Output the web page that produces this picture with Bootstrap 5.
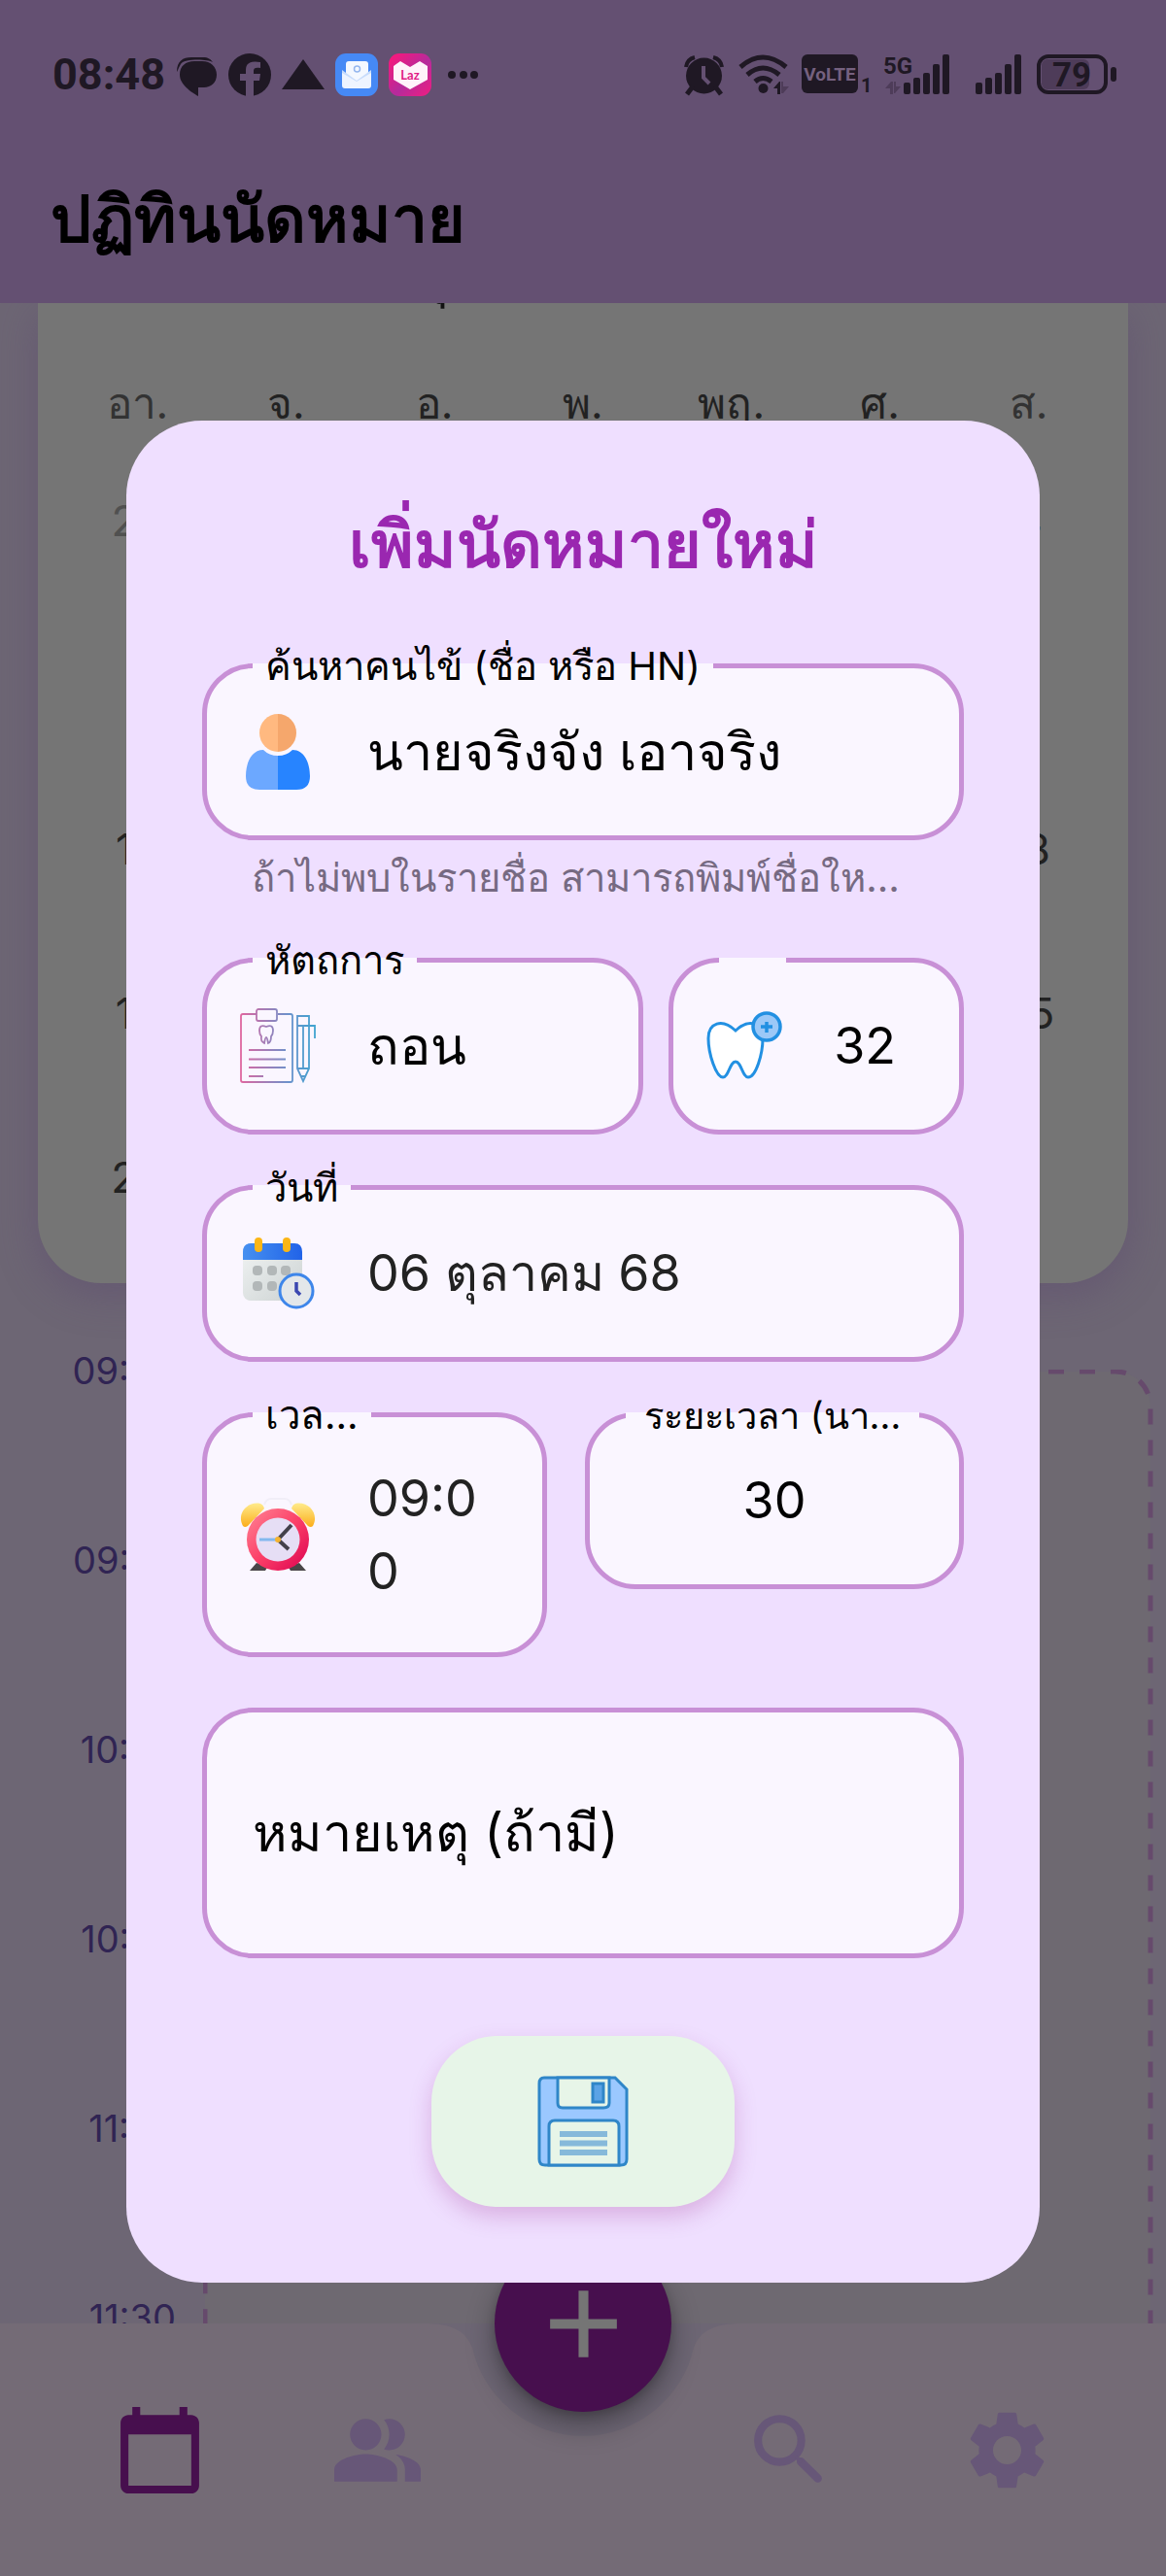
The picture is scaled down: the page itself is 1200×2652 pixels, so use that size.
<!DOCTYPE html>
<html lang="th">
<head>
<meta charset="utf-8">
<meta name="viewport" content="width=device-width, initial-scale=1">
<title>ปฏิทินนัดหมาย</title>
<link href="https://cdn.jsdelivr.net/npm/bootstrap@5.3.0/dist/css/bootstrap.min.css" rel="stylesheet">
<style>
:root{--ink:#1f1824;--bar:#645072;--page:#6d6674;--lilac:#efdfff;--field:#faf6ff;--line:#c890d6}
body{font-family:Inter,"Noto Sans",sans-serif;background:var(--page);color:#000}
.app-shell{height:100vh;min-height:2652px;overflow:hidden}
.app-bar{background:var(--bar);height:312px}
.status-row{height:130px;padding:24px 50px 0 54px;color:var(--ink)}
.status-row svg{display:block;flex:none}
.clock{font:700 45px/44px Roboto,sans-serif;margin-right:12px}
.app-title{font-size:66px;font-weight:700;line-height:90px;padding:50px 52px 0}
.scroll-area{overflow:hidden;min-height:0;padding:0 39px}
.month-card{background:#757575;border-radius:0 0 65px 65px;height:1009px;padding:0 26px;box-shadow:0 12px 40px rgba(90,72,110,.45);overflow:hidden}
.month-name{font-size:60px;line-height:78px;margin-top:-71px;text-align:center;color:#111}
.month-grid{width:100%;table-layout:fixed;text-align:center;font-size:44px;color:#222}
.month-grid th{font-weight:400;height:131px;padding-top:62px;line-height:69px;vertical-align:top;font-size:44px}
.month-grid th.rest-day{color:#333}
.month-grid td{height:169px;line-height:50px;padding:0}
.month-grid td.off-month{color:#505050}
.day-plan{margin-top:65px}
.hours{width:170px;flex:none;font-size:38px;line-height:50px;color:#302453;padding-right:28px;text-align:right}
.hours li{height:195px}
.slot-box{height:1100px;margin:24px -26px 0 0}
.slot-box rect{width:calc(100% - 5px);height:calc(100% - 5px);fill:#6e6971;stroke:#664a6c;stroke-width:5;stroke-dasharray:16 16}
.bottom-nav{height:260px;padding:0 52px}
.bottom-nav a{color:#675778;flex:1}
.bottom-nav a.current{color:#470f4e}
.bottom-nav svg{width:97px;height:97px;fill:currentColor;display:block}
.nav-shape{inset:0;color:#746b76}
.nav-shape div{background:currentColor}
.nav-shape .nav-notch{width:400px;height:260px;flex:none}
.nav-gap{width:200px}
.fab{width:182px;height:182px;top:-91px;left:calc(50% - 91px);background:#470f4e;color:#757575;box-shadow:0 14px 30px rgba(0,0,0,.32),0 4px 10px rgba(0,0,0,.15)}
.overlay{inset:0;padding:130px 130px 0}
.sheet{background:var(--lilac);border-radius:78px;padding:78px}
.sheet-title{color:#9a27b0;font-size:66px;line-height:98px;font-weight:700;margin-bottom:74px}
.form-stack{gap:52px}
.pair-a{gap:26px}.pair-b{gap:39px}
.w-proc{width:60%}.w-tooth{width:40%}
.w-time{width:calc(100% * 10 / 21)}.w-long{width:calc(100% * 11 / 21)}
.box-field{border:5px solid var(--line);border-radius:52px;background:var(--field);min-height:182px;padding:46px 34px;gap:53px;min-width:0}
.box-field>svg{width:78px;height:78px;flex:none}
.box-field>label{top:-33px;left:47px;height:56px;line-height:62px;font-size:40px;padding:0 13px;white-space:nowrap;background:linear-gradient(transparent 50%,var(--field) 50%)}
.box-field>label.blank-label{width:69px}
.box-field>label.wide-label{left:37px;padding:0 19px;font-size:38px}
.box-field .form-control{color:#000;font-size:54px;line-height:78px;height:78px;min-height:0;font-family:inherit;resize:none;overflow:hidden;border-radius:0}
.box-field .num-ink{font-size:52px}
.box-field .date-ink{color:#222;font-size:52px}
.box-field .time-two{height:150px;line-height:75px;word-break:break-all;width:122px}
.note-field{min-height:258px;padding:46px 47px}
.note-field .form-control{line-height:84px;height:84px}
.note-field .form-control::placeholder{color:#000;opacity:1}
.hint{color:#766a82;font-size:40px;line-height:61px;padding:0 51px;margin-top:8px}
.save-btn{width:312px;height:176px;border-radius:68px;background:#e7f5e8;margin-top:80px;box-shadow:0 10px 22px rgba(156,39,140,.25)}
</style>
</head>
<body>
<div class="app-shell position-relative d-flex flex-column">
  <header class="app-bar flex-shrink-0">
    <div class="status-row d-flex align-items-center justify-content-between">
      <div class="d-flex align-items-center">
        <span class="clock">08:48</span>
        <svg width="310" height="44" viewBox="0 0 310 44" fill="#1f1824" aria-hidden="true">
          <path d="M0 19C0 8 6 4 15 4h12c5 0 8 2 10 5C32 6 8 5 4 11c-2 3-3 7-4 8z"/>
          <path d="M3 22C3 13 9 8 18 8h8c9 0 15 6 15 14s-6 13-13 13h-6v9C15 40 3 32 3 22z"/>
          <circle cx="75" cy="22" r="22"/>
          <path fill="#645072" d="M71 44V28h-6v-7h6v-4c0-7 5-10 15-8v6c-5-1-7 0-7 3v3h7l-1 7h-6v16z"/>
          <path d="M130 6l22 31h-44z"/>
          <rect x="163" width="44" height="44" rx="11" fill="#4689f5"/>
          <rect x="174" y="8" width="23" height="24" rx="3" fill="#f4f8ff"/>
          <path fill="#c8dcfb" d="M170 17l15 11 15-11v13h-30z"/><path fill="#eef4ff" d="M170 20l15 9 15-9v13q0 3-3 3h-24q-3 0-3-3z"/>
          <circle cx="185.500" cy="16" r="3" fill="none" stroke="#94b6ee" stroke-width="1.500"/>
          <defs><linearGradient id="lz" x1="0" y1="0" x2="1" y2="1"><stop offset="0" stop-color="#ff1578"/><stop offset=".55" stop-color="#b52b9c"/><stop offset="1" stop-color="#f01d80"/></linearGradient></defs>
          <rect x="218" width="44" height="44" rx="11" fill="url(#lz)"/>
          <path fill="#fff2fa" d="M223 13l7-5 10 6 10-6 8 5v14l-18 10-17-10z"/>
          <text x="240" y="27" text-anchor="middle" font-family="Lato,sans-serif" font-weight="700" font-size="13" fill="#e01b86">Laz</text>
          <circle cx="283" cy="22" r="4"/><circle cx="295" cy="22" r="4"/><circle cx="306" cy="22" r="4"/>
        </svg>
      </div>
      <svg width="446" height="44" viewBox="704 55 446 44" fill="#1f1824" aria-hidden="true">
        <circle cx="724.500" cy="78" r="18.500"/><path d="M707 97l6-8M742 97l-6-8" stroke="#1f1824" stroke-width="5"/>
        <path d="M706 69q1-8 9-10M743 69q-1-8-9-10" fill="none" stroke="#1f1824" stroke-width="4"/>
        <path d="M724 68v12l6 6" fill="none" stroke="#645072" stroke-width="4"/>
        <g fill="none" stroke="#1f1824" stroke-width="5"><path d="M762 69q23-20 47 0M769 77q16-14 33 0M777 84q8-7 17 0"/></g><circle cx="785.500" cy="91" r="5"/>
        <path d="M796 91l6-7h1v13h-3v-6z"/><path d="M812 89l-6 7h-2V84h2v5z" fill="#4e3c59"/>
        <rect x="825" y="56" width="58" height="40" rx="6"/>
        <text x="854" y="83" text-anchor="middle" font-family="Roboto,sans-serif" font-weight="700" font-size="19" fill="#75617f">VoLTE</text>
        <text x="886" y="95" font-family="Roboto,sans-serif" font-weight="700" font-size="20">1</text>
        <text x="909" y="76" font-family="Roboto,sans-serif" font-weight="700" font-size="24">5G</text>
        <path d="M911 91l6-7h2v13h-3v-6zM927 89l-6 7h-1V84h2v5z" fill="#4e3c59"/>
        <g><rect x="930" y="85" width="7" height="12" rx="2"/><rect x="940" y="80" width="7" height="17" rx="2"/><rect x="950" y="75" width="7" height="22" rx="2"/><rect x="960" y="66" width="7" height="31" rx="2"/><rect x="970" y="56" width="7" height="41" rx="2"/></g>
        <g transform="translate(74 0)"><rect x="930" y="85" width="7" height="12" rx="2"/><rect x="940" y="80" width="7" height="17" rx="2"/><rect x="950" y="75" width="7" height="22" rx="2"/><rect x="960" y="66" width="7" height="31" rx="2"/><rect x="970" y="56" width="7" height="41" rx="2"/></g>
        <rect x="1069" y="58" width="69" height="37" rx="10" fill="none" stroke="#1f1824" stroke-width="4"/><rect x="1072" y="61" width="49" height="31" rx="6" fill="#4e3c59"/>
        <rect x="1143" y="69" width="6" height="15" rx="3"/>
        <text x="1103" y="89" text-anchor="middle" font-family="Roboto,sans-serif" font-weight="700" font-size="35">79</text>
      </svg>
    </div>
    <h1 class="app-title mb-0">ปฏิทินนัดหมาย</h1>
  </header>

  <main class="scroll-area flex-grow-1">
    <section class="month-card">
      <div class="month-name">ตุลาคม 2568</div>
      <table class="month-grid">
        <thead><tr><th class="rest-day">อา.</th><th>จ.</th><th>อ.</th><th>พ.</th><th>พฤ.</th><th>ศ.</th><th class="rest-day">ส.</th></tr></thead>
        <tbody>
          <tr><td class="off-month">28</td><td></td><td></td><td></td><td></td><td></td><td>4</td></tr>
          <tr><td></td><td></td><td></td><td></td><td></td><td></td><td></td></tr>
          <tr><td>12</td><td></td><td></td><td></td><td></td><td></td><td>18</td></tr>
          <tr><td>19</td><td></td><td></td><td></td><td></td><td></td><td>25</td></tr>
          <tr><td>26</td><td></td><td></td><td></td><td></td><td></td><td></td></tr>
        </tbody>
      </table>
    </section>
    <section class="day-plan d-flex">
      <ul class="hours list-unstyled mb-0"><li>09:00</li><li>09:30</li><li>10:00</li><li>10:30</li><li>11:00</li><li>11:30</li></ul>
      <div class="slot-box flex-grow-1"><svg class="d-block" width="100%" height="100%" aria-hidden="true"><rect x="2" y="2" rx="36"/></svg></div>
    </section>
  </main>

  <nav class="bottom-nav position-relative flex-shrink-0 d-flex align-items-center">
    <div class="nav-shape position-absolute d-flex">
      <div class="flex-grow-1"></div>
      <svg class="nav-notch" viewBox="0 0 400 260" aria-hidden="true"><path d="M0 0H37C65 0 80 8 86 25A117 117 0 0 0 314 25C320 8 335 0 363 0H400V260H0z"/></svg>
      <div class="flex-grow-1"></div>
    </div>
    <a href="#" class="current position-relative d-flex justify-content-center" aria-label="ปฏิทิน"><svg viewBox="0 0 24 24"><path d="M20 3h-1V1h-2v2H7V1H5v2H4c-1.100 0-2 .9-2 2v16c0 1.100.9 2 2 2h16c1.100 0 2-.9 2-2V5c0-1.100-.9-2-2-2zm0 18H4V8h16v13z"/></svg></a>
    <a href="#" class="position-relative d-flex justify-content-center" aria-label="คนไข้"><svg viewBox="0 0 24 24"><path d="M16.670 13.130C18.040 14.060 19 15.320 19 17v3h4v-3c0-2.180-3.570-3.470-6.330-3.870zM15 12c2.210 0 4-1.790 4-4s-1.790-4-4-4c-.47 0-.91.1-1.330.24C14.500 5.270 15 6.580 15 8s-.5 2.730-1.330 3.760c.42.14.86.24 1.330.24zM9 12c2.210 0 4-1.790 4-4s-1.790-4-4-4-4 1.790-4 4 1.790 4 4 4zm0 1c-2.670 0-8 1.340-8 4v3h16v-3c0-2.660-5.330-4-8-4z"/></svg></a>
    <div class="nav-gap"></div>
    <a href="#" class="position-relative d-flex justify-content-center" aria-label="ค้นหา"><svg viewBox="0 0 24 24"><circle cx="9.500" cy="9.500" r="5.500" fill="none" stroke="currentColor" stroke-width="2"/><path d="M14.900 14.900l4.300 4.300" stroke="currentColor" stroke-width="2.100" stroke-linecap="round"/><path d="M13.500 13.500l1.500 1.500" stroke="currentColor" stroke-width="1"/></svg></a>
    <a href="#" class="position-relative d-flex justify-content-center" aria-label="ตั้งค่า"><svg viewBox="0 0 24 24"><path d="M19.140 12.940c.04-.3.06-.61.06-.94 0-.32-.02-.64-.07-.94l2.030-1.580c.18-.14.23-.41.12-.61l-1.920-3.320c-.12-.22-.37-.29-.59-.22l-2.390.96c-.5-.38-1.030-.7-1.620-.94L14.400 2.810c-.04-.24-.24-.41-.48-.41h-3.840c-.24 0-.43.17-.47.41L9.250 5.350c-.59.24-1.130.57-1.620.94l-2.390-.96c-.22-.08-.47 0-.59.22L2.740 8.870c-.12.21-.08.47.12.61l2.030 1.580c-.05.3-.09.63-.09.94s.02.64.07.94l-2.030 1.580c-.18.14-.23.41-.12.61l1.920 3.320c.12.22.37.29.59.22l2.390-.96c.5.38 1.030.7 1.620.94l.36 2.540c.05.24.24.41.48.41h3.840c.24 0 .44-.17.47-.41l.36-2.540c.59-.24 1.130-.56 1.620-.94l2.390.96c.22.08.47 0 .59-.22l1.920-3.320c.12-.22.07-.47-.12-.61l-2.010-1.580zM12 15.600c-1.980 0-3.600-1.620-3.600-3.600s1.620-3.600 3.600-3.600 3.600 1.620 3.600 3.600-1.620 3.600-3.600 3.600z"/></svg></a>
    <button type="button" class="fab btn position-absolute rounded-circle border-0 p-0 d-flex align-items-center justify-content-center" aria-label="เพิ่ม"><svg viewBox="0 0 24 24"><path d="M12 3.500V20.500M3.500 12H20.500" stroke="currentColor" stroke-width="2.500"/></svg></button>
  </nav>

  <div class="overlay position-absolute d-flex align-items-center">
    <form class="sheet flex-grow-1" role="dialog" aria-labelledby="dlg">
      <h2 id="dlg" class="sheet-title text-center">เพิ่มนัดหมายใหม่</h2>
      <div class="form-stack d-flex flex-column">
        <div>
          <div class="box-field position-relative d-flex align-items-center">
            <label class="position-absolute" for="f1">ค้นหาคนไข้ (ชื่อ หรือ HN)</label>
            <svg viewBox="0 0 78 78" aria-hidden="true"><path fill="#ffb980" d="M39 0a19 19.500 0 0 0 0 39z"/><path fill="#f5a76c" d="M39 0a19 19.500 0 0 1 0 39z"/><path fill="#6ca8ff" d="M39 43q-9 0-15-6C12 37 6 50 6 64q0 14 14 14h19z"/><path fill="#2784ff" d="M39 43q9 0 15-6c12 0 18 13 18 27q0 14-14 14H39z"/></svg>
            <input id="f1" class="form-control border-0 bg-transparent p-0 shadow-none" type="text" value="นายจริงจัง เอาจริง">
          </div>
          <div class="hint text-nowrap">ถ้าไม่พบในรายชื่อ สามารถพิมพ์ชื่อให…</div>
        </div>
        <div class="pair-a d-flex align-items-start">
          <div class="box-field w-proc position-relative d-flex align-items-center">
            <label class="position-absolute" for="f2">หัตถการ</label>
            <svg viewBox="0 0 78 78" fill="none" stroke="url(#cb)" stroke-width="1.800" aria-hidden="true"><defs><linearGradient id="cb" gradientUnits="userSpaceOnUse" x1="0" y1="0" x2="78" y2="0"><stop offset="0" stop-color="#e0669f"/><stop offset=".65" stop-color="#6a92cc"/><stop offset="1" stop-color="#3fa4d0"/></linearGradient></defs><path d="M17 6H3q-2 0-2 2v66q0 2 2 2h49q2 0 2-2V8q0-2-2-2H39"/><rect x="17" y="1" width="21" height="12" rx="2"/><path d="M9 43h38M9 52.500h38M9 61h38M9 70h15"/><path d="M27 19q7-3 7 4 0 4-2 6 0 6-3 7-1-6-2-6t-2 6q-4-2-3-7-2-2-2-6 0-7 7-4zM59 8h12v54l-6 13-6-13zM59 18h18v13M65 18v43M59 62h12M62 70h5"/></svg>
            <input id="f2" class="form-control border-0 bg-transparent p-0 shadow-none" type="text" value="ถอน">
          </div>
          <div class="box-field w-tooth position-relative d-flex align-items-center">
            <label class="blank-label position-absolute" for="f3" aria-label="ซี่ฟัน"></label>
            <svg viewBox="0 0 78 78" fill="none" stroke="#2290e2" stroke-width="3" aria-hidden="true"><path fill="#fff" d="M30 23C16 10 2 15 2 31c0 16 8 40 15 40 6 0 7-16 13-16s7 16 13 16c8 0 15-24 15-40C58 15 44 10 30 23z"/><circle cx="62" cy="19" r="14" fill="#9bc8f7" stroke-width="3.500"/><path d="M62 14v11M56 19h12" stroke-width="3.500"/></svg>
            <input id="f3" class="form-control num-ink border-0 bg-transparent p-0 shadow-none" type="text" value="32">
          </div>
        </div>
        <div class="box-field position-relative d-flex align-items-center">
          <label class="position-absolute" for="f4">วันที่</label>
          <svg viewBox="0 0 78 78" aria-hidden="true"><defs><linearGradient id="cg" x1="0" y1="0" x2="1" y2="1"><stop offset="0" stop-color="#f0f3f3"/><stop offset="1" stop-color="#ccd2d2"/></linearGradient><linearGradient id="ch" x1="0" x2="1" y1="0" y2="0"><stop offset="0" stop-color="#4690f0"/><stop offset="1" stop-color="#2163e8"/></linearGradient></defs><rect x="3" y="10" width="61" height="57" rx="8" fill="url(#cg)"/><path fill="url(#ch)" d="M3 25v-8q0-9 8-9h45q8 0 8 9v8z"/><rect x="15" y="2" width="8" height="15" rx="4" fill="#fbb616"/><rect x="44" y="2" width="8" height="15" rx="4" fill="#fbb616"/><g fill="#b2b7b8"><rect x="13" y="31" width="10" height="10" rx="4"/><rect x="28" y="31" width="10" height="10" rx="4"/><rect x="42" y="31" width="10" height="10" rx="4"/><rect x="13" y="47" width="10" height="10" rx="4"/><rect x="28" y="47" width="10" height="10" rx="4"/></g><circle cx="58" cy="57" r="17" fill="#e3e7ea" stroke="#3e86ea" stroke-width="3"/><path d="M58 48v9l4 4" fill="none" stroke="#3b47b0" stroke-width="3.500"/></svg>
          <input id="f4" class="form-control date-ink border-0 bg-transparent p-0 shadow-none" type="text" value="06 ตุลาคม 68">
        </div>
        <div class="pair-b d-flex align-items-start">
          <div class="box-field w-time position-relative d-flex align-items-center">
            <label class="position-absolute" for="f5">เวล…</label>
            <svg viewBox="0 0 78 78" aria-hidden="true"><defs><linearGradient id="rg" x1="0" y1="0" x2="1" y2="1"><stop offset="0" stop-color="#ff8696"/><stop offset=".5" stop-color="#fb4068"/><stop offset="1" stop-color="#dc0050"/></linearGradient><linearGradient id="yg" x1="0" y1="0" x2="0" y2="1"><stop offset="0" stop-color="#ffeb8c"/><stop offset="1" stop-color="#fbae1b"/></linearGradient></defs><path d="M25 8q2-6 7-6h14q5 0 7 6" fill="none" stroke="#f1eef8" stroke-width="2"/><path d="M17 68l-7 8h16l3-5zM61 68l7 8H52l-3-5z" fill="#4a4648"/><path d="M3 30C-4 17 8 4 21 7q3 1 4 5L8 30q-3 2-5 0zM75 30C82 17 70 4 57 7q-3 1-4 5l17 18q3 2 5 0z" fill="url(#yg)"/><circle cx="39" cy="44" r="32" fill="url(#rg)"/><circle cx="39" cy="44" r="22.500" fill="#e6def5"/><path d="M20 44h17" stroke="#83b8ee" stroke-width="3"/><path d="M39 44l14-15M39 44l11 10" stroke="#43404a" stroke-width="4"/><circle cx="39" cy="44" r="3" fill="#f5b331"/></svg>
            <textarea id="f5" rows="2" class="form-control date-ink time-two border-0 bg-transparent p-0 shadow-none">09:00</textarea>
          </div>
          <div class="box-field w-long position-relative d-flex align-items-center">
            <label class="wide-label position-absolute" for="f6">ระยะเวลา (นา…</label>
            <input id="f6" class="form-control num-ink text-center border-0 bg-transparent p-0 shadow-none" type="text" value="30">
          </div>
        </div>
        <div class="box-field note-field d-flex align-items-center">
          <textarea id="f7" rows="1" class="form-control border-0 bg-transparent p-0 shadow-none" aria-label="หมายเหตุ" placeholder="หมายเหตุ (ถ้ามี)"></textarea>
        </div>
      </div>
      <button type="button" class="save-btn btn border-0 d-flex align-items-center justify-content-center mx-auto" aria-label="บันทึก">
        <svg width="94" height="94" viewBox="0 0 94 94" stroke="#2f86c8" stroke-width="3" aria-hidden="true"><path fill="#9bc8ff" d="M7 2h73l12 12v72q0 6-6 6H8q-6 0-6-6V8q0-6 5-6z"/><path fill="#e7f5e8" d="M21 2v26q0 5 5 5h42q6 0 6-5V2zM12 92V52q0-6 6-6h60q6 0 6 6v40z"/><rect x="57" y="8" width="11" height="19" fill="#5ba3e6"/><path d="M23 60h49M23 69.500h49M23 79h49" stroke="#86b9da" stroke-width="6"/></svg>
      </button>
    </form>
  </div>
</div>
<script src="https://cdn.jsdelivr.net/npm/bootstrap@5.3.0/dist/js/bootstrap.bundle.min.js"></script>
</body>
</html>
